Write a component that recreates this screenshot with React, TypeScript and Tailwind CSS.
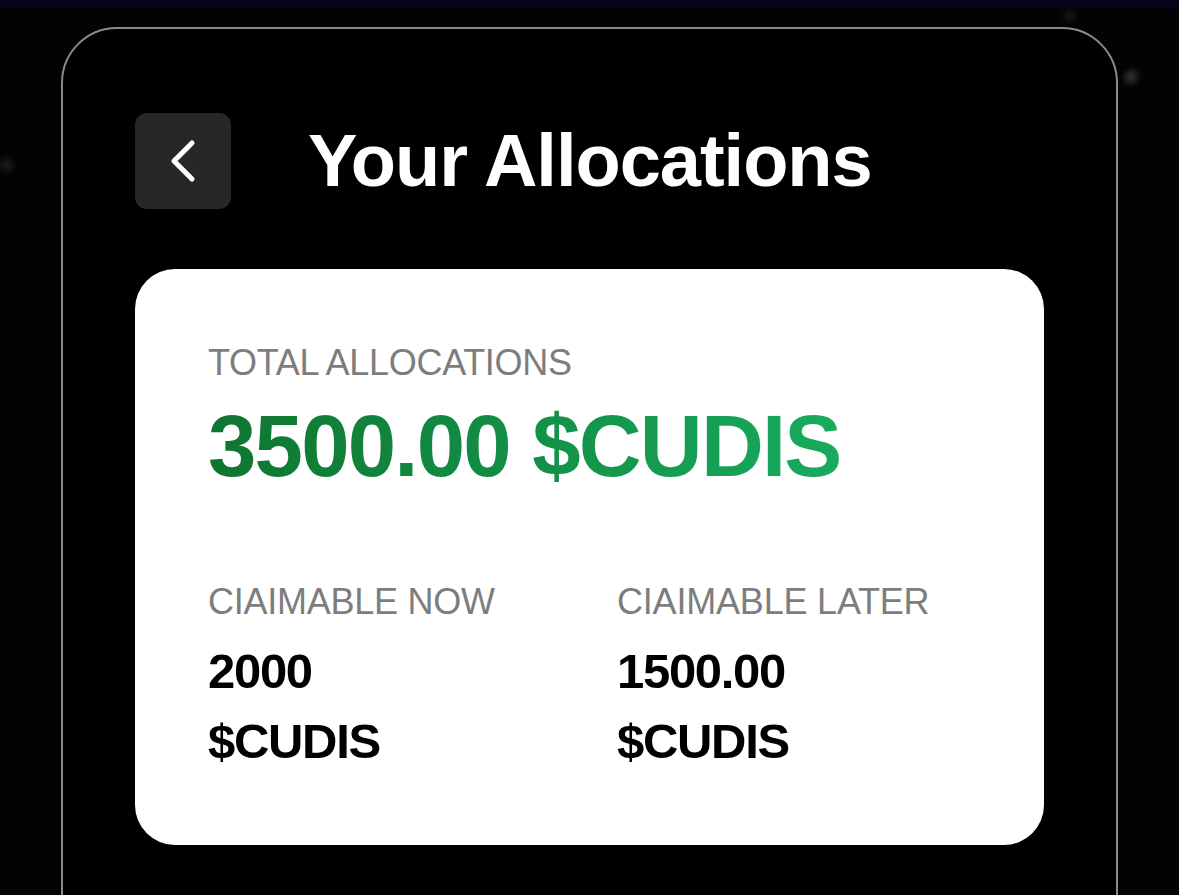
import { ChevronLeft } from "lucide-react";

export default function App() {
  return (
    <div
      className="relative h-[895px] w-[1179px] overflow-hidden bg-[#030305]"
      style={{ fontFamily: '"Liberation Sans", Arial, sans-serif' }}
    >
      <div className="h-[8px] w-full bg-[#06041a]" />
      {/* faint background stars */}
      <div className="absolute left-[1120px] top-[66px] h-[22px] w-[22px] rounded-full bg-[radial-gradient(circle,rgba(255,255,255,0.18),transparent_70%)]" />
      <div className="absolute left-[1060px] top-[6px] h-[20px] w-[20px] rounded-full bg-[radial-gradient(circle,rgba(255,255,255,0.08),transparent_70%)]" />
      <div className="absolute left-[-4px] top-[154px] h-[22px] w-[22px] rounded-full bg-[radial-gradient(circle,rgba(255,255,255,0.1),transparent_70%)]" />

      <div className="relative ml-[61px] mt-[19px] h-[1000px] w-[1057px] rounded-[56px] border-2 border-[#8a8a8a] bg-black px-[72px] pt-[84px]">
        <div className="flex items-center">
          <button className="flex h-[96px] w-[96px] items-center justify-center rounded-[12px] bg-[#272727] text-white">
            <ChevronLeft size={72} strokeWidth={1.7} />
          </button>
          <h1 className="ml-[77px] text-[74px] font-bold leading-none tracking-[-1px] text-white">
            Your Allocations
          </h1>
        </div>

        <div className="mt-[60px] h-[576px] w-[909px] rounded-[40px] bg-white pl-[73px] pt-[76px]">
          <div className="text-[36px] leading-none tracking-[-0.3px] text-[#7d7d7d]">TOTAL ALLOCATIONS</div>
          <div className="mt-[21px] w-fit bg-gradient-to-r from-[#0f7530] to-[#18ab5e] bg-clip-text text-[87px] font-bold leading-none tracking-[-1.8px] text-transparent">
            3500.00 $CUDIS
          </div>

          <div className="mt-[95px] grid grid-cols-[409px_1fr]">
            <div>
              <div className="text-[36px] leading-none tracking-[-0.25px] text-[#7d7d7d]">CIAIMABLE NOW</div>
              <div className="mt-[16px] text-[49px] font-bold leading-[70px] tracking-[-1.3px] text-black">
                2000
                <br />
                $CUDIS
              </div>
            </div>
            <div>
              <div className="text-[36px] leading-none tracking-[-0.2px] text-[#7d7d7d]">CIAIMABLE LATER</div>
              <div className="mt-[16px] text-[49px] font-bold leading-[70px] tracking-[-1.3px] text-black">
                1500.00
                <br />
                $CUDIS
              </div>
            </div>
          </div>
        </div>
      </div>
    </div>
  );
}
